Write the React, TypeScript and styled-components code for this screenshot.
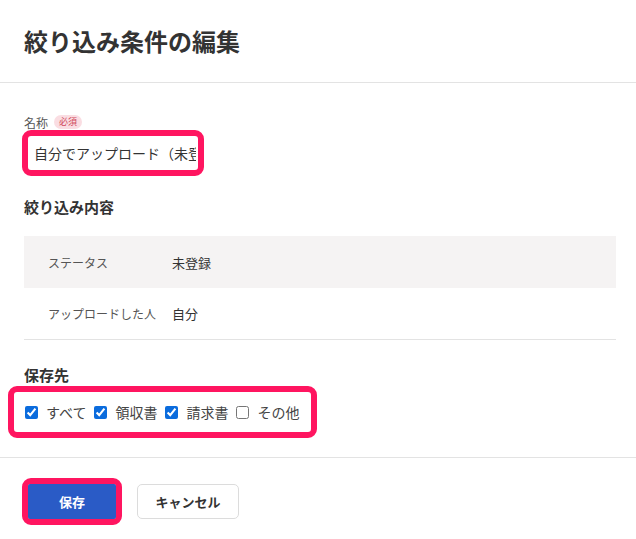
import React from "react";
import styled, { createGlobalStyle } from "styled-components";

const Global = createGlobalStyle`
  html, body { margin: 0; padding: 0; background: #fff; }
  body {
    font-family: "Noto Sans CJK JP", "Noto Sans", "Liberation Sans", sans-serif;
    color: #333;
  }
  * { box-sizing: border-box; }
`;

const PINK = "#ff1560";

const Dialog = styled.div`
  width: 636px;
  min-height: 539px;
  background: #fff;
  display: flex;
  flex-direction: column;
  & > * { flex-shrink: 0; }
`;

const Header = styled.header`
  height: 83px;
  padding: 0 24px;
  display: flex;
  align-items: center;
  border-bottom: 1px solid #e3e3e3;
`;

const Title = styled.h1`
  margin: 0;
  font-size: 24px;
  font-weight: 700;
  line-height: 32px;
  color: #333;
`;

const Body = styled.main`
  padding: 31px 20px 19px 24px;
  display: flex;
  flex-direction: column;
  & > * { flex-shrink: 0; }
`;

const LabelRow = styled.div`
  display: flex;
  align-items: center;
  gap: 6px;
  height: 16px;
  font-size: 12px;
  color: #555;
`;

const Badge = styled.span`
  display: inline-flex;
  align-items: center;
  height: 14px;
  padding: 0 5px;
  border-radius: 7px;
  background: #fadde2;
  color: #d04a5c;
  font-size: 9px;
  line-height: 14px;
`;

const Highlight = styled.div<{ $pad?: number }>`
  display: inline-flex;
  align-items: center;
  align-self: flex-start;
  border: 6px solid ${PINK};
  border-radius: 9px;
  padding: ${(p) => p.$pad ?? 0}px;
  background: #fff;
`;

const InputFrame = styled(Highlight)`
  margin-left: -2px;
  width: 182px;
  height: 46px;
  padding: 0 2px 0 6px;
`;

const InputText = styled.div`
  font-size: 14px;
  color: #333;
  white-space: nowrap;
  overflow: hidden;
  width: 100%;
`;

const SectionTitle = styled.h2<{ $mt: number }>`
  margin: ${(p) => p.$mt}px 0 0;
  font-size: 15px;
  font-weight: 700;
  line-height: 22px;
  color: #333;
`;

const Table = styled.div`
  margin-top: 18px;
  display: flex;
  flex-direction: column;
  border-bottom: 1px solid #e3e3e3;
`;

const Row = styled.div<{ $shaded?: boolean }>`
  display: grid;
  grid-template-columns: 124px 1fr;
  align-items: center;
  height: ${(p) => (p.$shaded ? 52 : 51)}px;
  padding-left: 24px;
  background: ${(p) => (p.$shaded ? "#f5f3f3" : "#fff")};
  font-size: 13px;
`;

const Key = styled.span`
  color: #555;
  font-size: 12px;
`;

const Value = styled.span`
  color: #333;
`;

const CheckGroup = styled(Highlight)`
  margin-left: -16px;
  height: 52px;
  padding: 0 12px 0 11px;
  gap: 8px;
`;

const CheckItem = styled.label`
  display: inline-flex;
  align-items: center;
  gap: 8px;
  font-size: 14px;
  color: #444;
`;

const Box = styled.input`
  margin: 0;
  width: 13px;
  height: 13px;
  accent-color: #0b6cdd;
`;

const Footer = styled.footer`
  border-top: 1px solid #e3e3e3;
  padding: 20px 22px;
  display: flex;
  align-items: center;
  gap: 15px;
`;

const SaveFrame = styled(Highlight)`
  padding: 0;
`;

const Button = styled.button<{ $primary?: boolean }>`
  font-family: inherit;
  font-size: 13px;
  font-weight: 700;
  height: 35px;
  border-radius: ${(p) => (p.$primary ? "2px" : "5px")};
  border: 1px solid ${(p) => (p.$primary ? "#2a5bc6" : "#dcdcdc")};
  background: ${(p) => (p.$primary ? "#2a5bc6" : "#fff")};
  color: ${(p) => (p.$primary ? "#fff" : "#333")};
  width: ${(p) => (p.$primary ? 88 : 102)}px;
  padding: 0;
  cursor: pointer;
`;

const items = [
  { label: "すべて", checked: true },
  { label: "領収書", checked: true },
  { label: "請求書", checked: true },
  { label: "その他", checked: false },
];

export default function App() {
  return (
    <>
      <Global />
      <Dialog>
        <Header>
          <Title>絞り込み条件の編集</Title>
        </Header>
        <Body>
          <LabelRow>
            名称<Badge>必須</Badge>
          </LabelRow>
          <InputFrame>
            <InputText>自分でアップロード（未登録）</InputText>
          </InputFrame>

          <SectionTitle $mt={20}>絞り込み内容</SectionTitle>
          <Table>
            <Row $shaded>
              <Key>ステータス</Key>
              <Value>未登録</Value>
            </Row>
            <Row>
              <Key>アップロードした人</Key>
              <Value>自分</Value>
            </Row>
          </Table>

          <SectionTitle $mt={24}>保存先</SectionTitle>
          <CheckGroup>
            {items.map((it) => (
              <CheckItem key={it.label}>
                <Box type="checkbox" defaultChecked={it.checked} />
                {it.label}
              </CheckItem>
            ))}
          </CheckGroup>
        </Body>
        <Footer>
          <SaveFrame>
            <Button $primary>保存</Button>
          </SaveFrame>
          <Button>キャンセル</Button>
        </Footer>
      </Dialog>
    </>
  );
}
